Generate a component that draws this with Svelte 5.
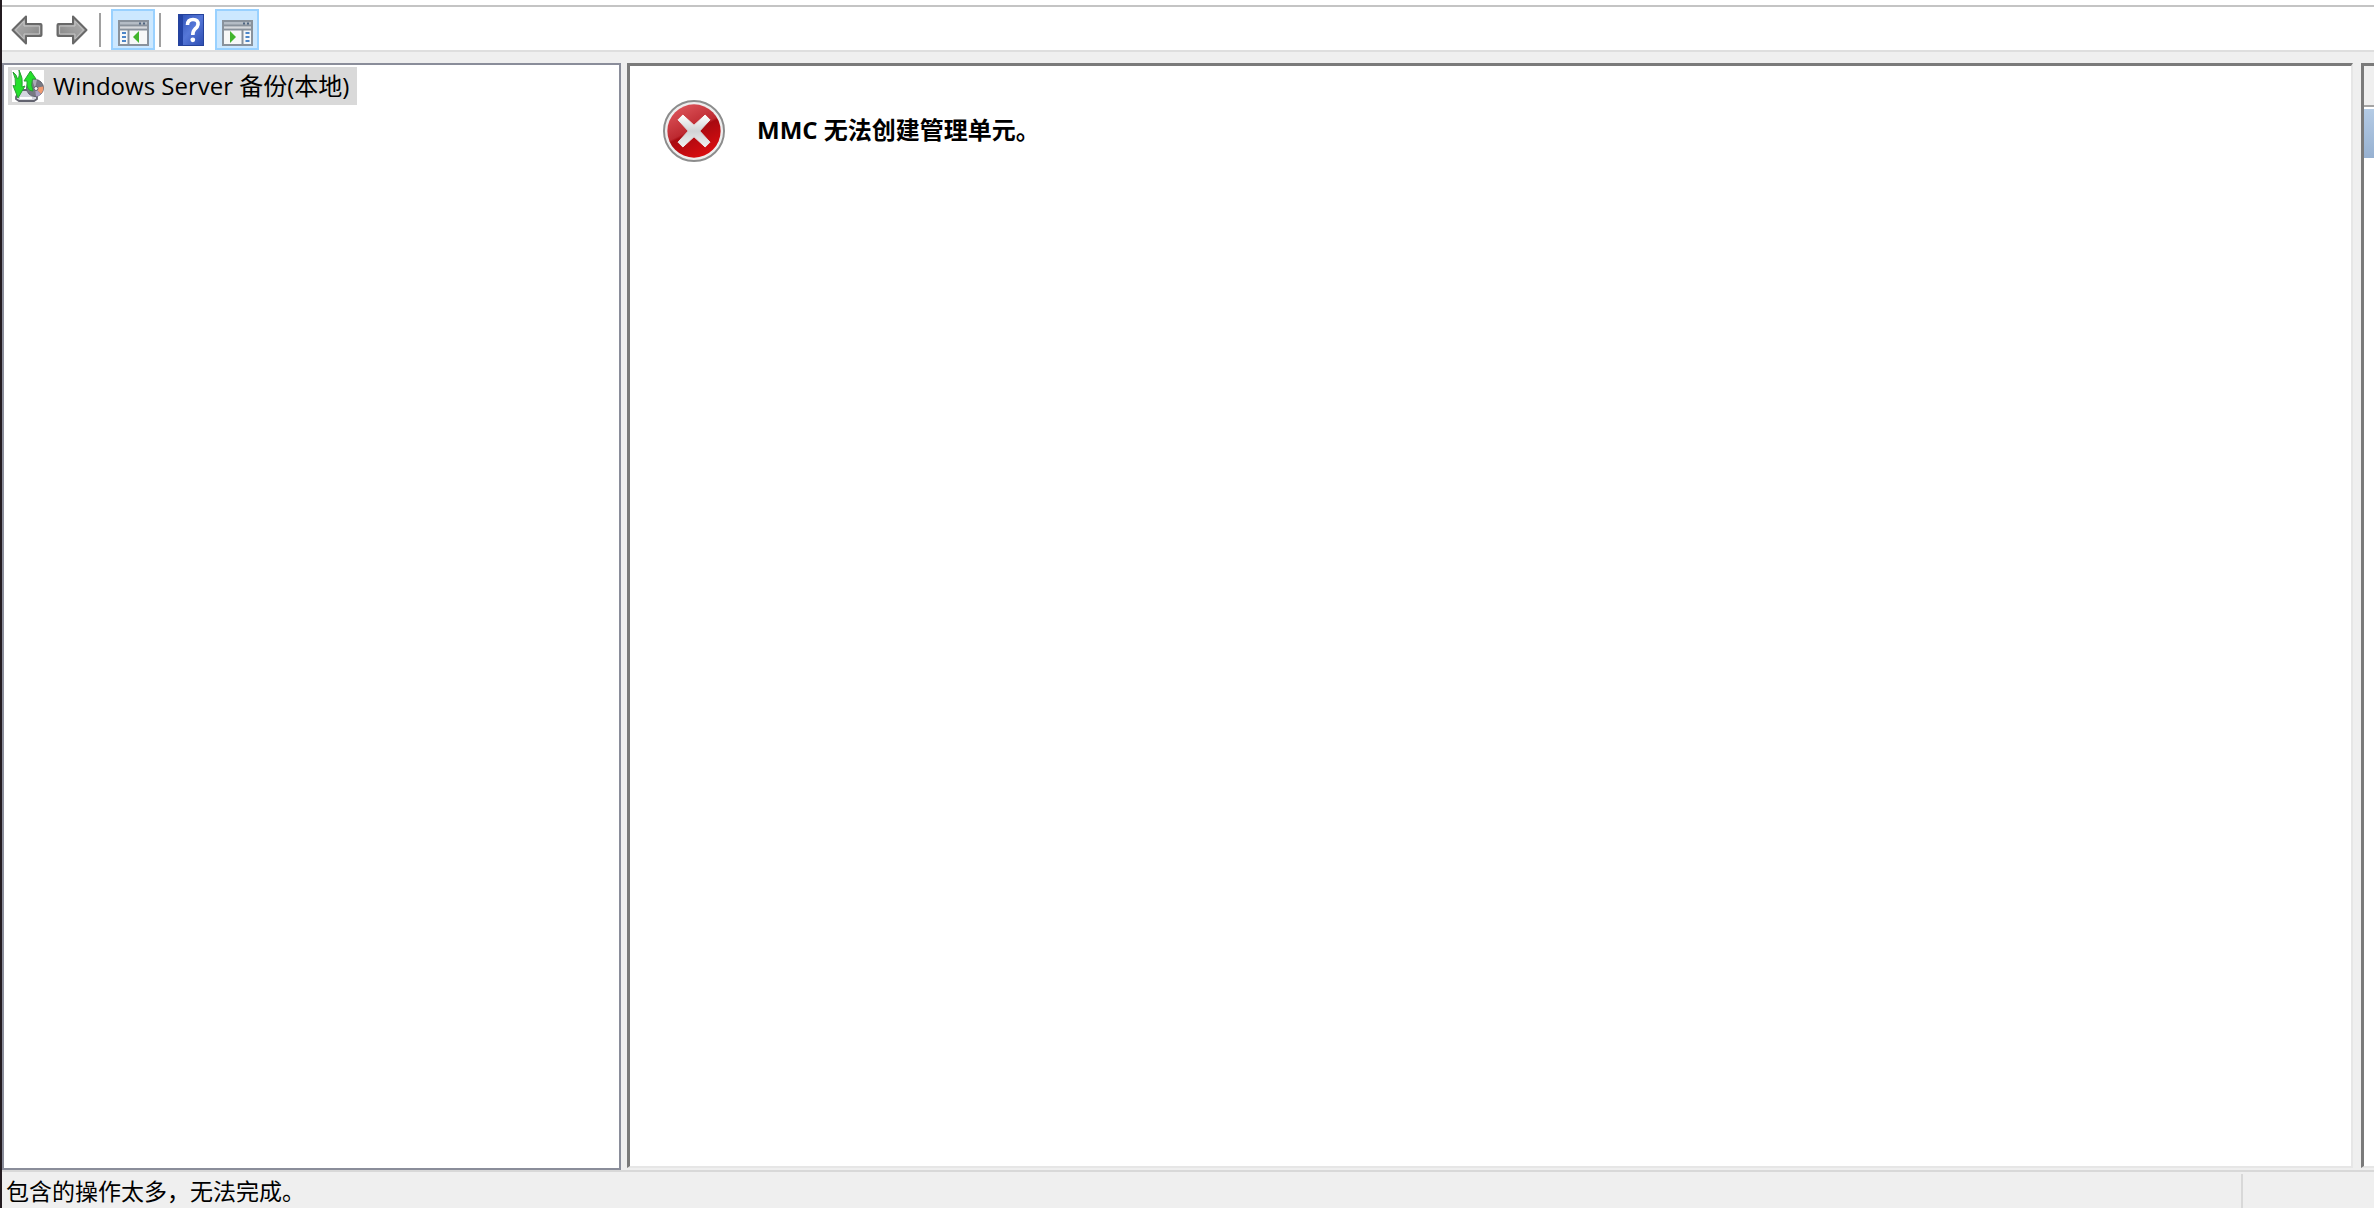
<script>
  let status = $state("包含的操作太多，无法完成。");
  let showTree = $state(true);
  let showActions = $state(true);
</script>

{#snippet arrow()}
  <svg viewBox="0 0 32 30" width="32" height="30" aria-hidden="true">
    <defs>
      <linearGradient id="arrow-fill" x1="0" y1="0" x2="1" y2="1">
        <stop offset="0" stop-color="#b2b2b2" />
        <stop offset="0.5" stop-color="#9c9c9c" />
        <stop offset="1" stop-color="#7d7d7d" />
      </linearGradient>
    </defs>
    <path d="M1.5 15 15 1.5V9H29.5Q30.5 9 30.5 10V20Q30.5 21 29.5 21H15V28.5Z" fill="url(#arrow-fill)" stroke="#686868" stroke-width="2" stroke-linejoin="round" />
    <path d="M4.5 15 13 6.2V11H28.4V19H13V23.8Z" fill="none" stroke="#c6c6c6" stroke-width="1" />
  </svg>
{/snippet}

{#snippet pane(side)}
  <svg viewBox="0 0 31 26" width="31" height="26" aria-hidden="true">
    <rect x="1" y="1" width="29" height="24" fill="#f7f8f8" stroke="#89929c" stroke-width="2" />
    <path d="M2 3.5H29" stroke="#b4bcc5" stroke-width="3" />
    <path d="M2 7.5H29" stroke="#d5d8dc" stroke-width="2" />
    <path d="M1 5.5H30M1 9.5H30" stroke="#89929c" stroke-width="2" />
    <path d="M21 3.5h2M25 3.5h2" stroke="#4f6580" stroke-width="2" />
    {#if side === "left"}
      <path d="M10.5 9V25" stroke="#89929c" stroke-width="2" />
      <path d="M4 13h4M4 17h4M4 21h4" stroke="#4d86c8" stroke-width="2" />
      <path d="M15 17 21 11V23Z" fill="#42b52c" />
    {:else}
      <path d="M20.5 9V25" stroke="#89929c" stroke-width="2" />
      <path d="M23.5 13h4M23.5 17h4M23.5 21h4" stroke="#4d86c8" stroke-width="2" />
      <path d="M14 17 8 11V23Z" fill="#42b52c" />
    {/if}
  </svg>
{/snippet}

<div class="window">
  <header class="toolbar">
    <button class="tool" aria-label="后退">{@render arrow()}</button>
    <button class="tool forward" aria-label="前进">{@render arrow()}</button>
    <span class="separator"></span>
    <button class="tool toggle" class:active={showTree} aria-label="显示/隐藏控制台树" onclick={() => (showTree = !showTree)}>
      {@render pane("left")}
    </button>
    <span class="separator second"></span>
    <button class="tool help" aria-label="帮助">
      <svg viewBox="0 0 26 32" width="26" height="32" aria-hidden="true">
        <defs>
          <linearGradient id="help-fill" x1="0" y1="0" x2="1" y2="1">
            <stop offset="0" stop-color="#2c50b4" />
            <stop offset="0.5" stop-color="#5577d8" />
            <stop offset="1" stop-color="#2c4cb0" />
          </linearGradient>
        </defs>
        <rect x="0.5" y="0.5" width="25" height="31" fill="url(#help-fill)" stroke="#25439c" />
        <path d="M1 1h4v30H1z" fill="#2343a4" />
        <path d="M9.5 11Q9.5 5.5 15 5.5Q20.5 5.5 20 10.5Q19.7 13 17 15Q14.8 17 14.8 21" fill="none" stroke="#fff" stroke-width="3.6" />
        <circle cx="14.8" cy="25.8" r="2.4" fill="#fff" />
      </svg>
    </button>
    <button class="tool toggle" class:active={showActions} aria-label="显示/隐藏操作窗格" onclick={() => (showActions = !showActions)}>
      {@render pane("right")}
    </button>
  </header>

  <main class="console">
    <nav class="tree">
      <a class="node" href="#backup">
        <svg viewBox="0 0 32 32" width="32" height="32" aria-hidden="true">
          <rect width="32" height="32" fill="#fff" />
          <path d="M4 27 8 20H21L25 27V29L22 31H7L4 29Z" fill="#d5d6e0" stroke="#62636f" stroke-width="1.8" />
          <path d="M8 28H20" stroke="#fff" stroke-width="2" />
          <circle cx="23" cy="18" r="8.5" fill="#777883" stroke="#62636f" />
          <path d="M23 18 20 10A8.5 8.5 0 0 1 25 9.7Z" fill="#a9aab4" />
          <path d="M23 18 31.200 16.500A8.500 8.500 0 0 1 29 24Z" fill="#f19a70" />
          <path d="M23 18 29 24A8.500 8.500 0 0 1 24 26.500Z" fill="#a99fc0" />
          <path d="M12 11 18.5 1 24 9H20.5Q18.5 15 21 21Q14 21 15 11Z" fill="#24e02b" stroke="#28a034" />
          <path d="M1 2Q4 8 3.5 16L1 15.5 6 28 13 16 10 17Q11.5 8 7 0Q8 7 5.5 9Q5 5 1 2Z" fill="#24e02b" stroke="#28a034" />
          <circle cx="24" cy="18.500" r="2" fill="#f5f5f5" stroke="#62636f" />
        </svg>
        <span>Windows Server 备份(本地)</span>
      </a>
    </nav>

    <section class="result">
      <svg class="error-icon" viewBox="0 0 64 64" width="62" height="62" aria-hidden="true">
        <defs>
          <linearGradient id="red" x1="0.2" y1="0" x2="0.7" y2="1">
            <stop offset="0" stop-color="#de565c" />
            <stop offset="0.48" stop-color="#bd2930" />
            <stop offset="0.52" stop-color="#a80a10" />
            <stop offset="1" stop-color="#dd0d10" />
          </linearGradient>
          <linearGradient id="cross" x1="0" y1="0" x2="0" y2="1">
            <stop offset="0" stop-color="#fff" />
            <stop offset="0.5" stop-color="#d0d3d5" />
            <stop offset="1" stop-color="#f0f0f0" />
          </linearGradient>
        </defs>
        <circle cx="32" cy="32" r="31" fill="#eee" stroke="#8c8c8c" stroke-width="2" />
        <circle cx="32" cy="32" r="27.5" fill="url(#red)" />
        <path d="M20.5 15.5 32 26 43.5 15.5 48.5 20.5 38 32 48.5 43.5 43.5 48.5 32 38 20.5 48.5 15.5 43.5 26 32 15.5 20.5Z" fill="url(#cross)" stroke="url(#cross)" stroke-linejoin="round" />
      </svg>
      <h1>MMC 无法创建管理单元。</h1>
    </section>

    <aside class="actions">
      <div class="actions-title"></div>
      <div class="actions-group"></div>
    </aside>
  </main>

  <footer class="status">
    <span class="message">{status}</span>
    <span class="cell"></span>
  </footer>
</div>

<style>
  :global(body) {
    margin: 0;
    overflow: hidden;
    background: #fff;
  }

  .window {
    box-sizing: border-box;
    display: flex;
    flex-direction: column;
    height: 100vh;
    border-left: 2px solid #231b20;
    background: #efefef;
    color: #000;
    font: 23px/32px "Open Sans", "Noto Sans CJK SC", sans-serif;
  }

  .toolbar {
    display: flex;
    align-items: center;
    height: 41px;
    margin: 5px 0 11px;
    padding: 2px 0 0 9px;
    border-top: 2px solid #c4c4c4;
    border-bottom: 2px solid #dedede;
    background: #fff;
    box-shadow: 0 -6px #fff;
  }

  .tool {
    display: flex;
    align-items: center;
    justify-content: center;
    padding: 0;
    border: 0;
    background: none;
  }

  .forward {
    margin-left: 13px;
    transform: scaleX(-1);
  }

  .separator {
    width: 2px;
    height: 34px;
    margin: 0 10px 0 11px;
    background: #a0a0a0;
  }

  .second {
    margin: 0 17px 0 4px;
  }

  .help {
    margin-right: 11px;
  }

  .toggle {
    box-sizing: border-box;
    width: 44px;
    height: 41px;
    padding-top: 6px;
    border: 2px solid transparent;
  }

  .toggle.active {
    border-color: #99d1ff;
    background: #cce8ff;
  }

  .console {
    display: grid;
    grid-template-columns: 619px 1fr 13px;
    flex: 1;
    min-height: 0;
  }

  .tree {
    padding: 2px 4px;
    border: 2px solid #8a8d9a;
    background: #fff;
  }

  .node {
    display: inline-flex;
    align-items: center;
    gap: 9px;
    height: 38px;
    padding: 0 8px 0 4px;
    background: #d9d9d9;
    color: #000;
    font-size: 24px;
    text-decoration: none;
    white-space: nowrap;
  }

  .result {
    display: flex;
    align-items: flex-start;
    gap: 32px;
    margin: 0 8px 2px 6px;
    padding: 34px 33px;
    border: 3px solid #7a7a7a;
    border-right: 2px solid #e6e6e6;
    border-bottom: 2px solid #e6e6e6;
    background: #fff;
  }

  h1 {
    margin: 0;
    font-size: 24px;
    line-height: 60px;
  }

  .actions {
    margin-bottom: 2px;
    border: 3px solid #7a7a7a;
    border-right: 0;
    border-bottom: 2px solid #e6e6e6;
    background: #fff;
  }

  .actions-title {
    height: 39px;
    border-bottom: 2px solid #a3a3a3;
    background: #efefef;
  }

  .actions-group {
    height: 49px;
    margin-top: 2px;
    background: linear-gradient(#b4cbe5, #97b1d1);
  }

  .status {
    display: flex;
    height: 36px;
    border-top: 2px solid #d8d8d8;
  }

  .message {
    flex: 1;
    padding-left: 4px;
    line-height: 38px;
  }

  .cell {
    width: 131px;
    margin-top: 2px;
    border-left: 2px solid #d8d8d8;
  }
</style>
